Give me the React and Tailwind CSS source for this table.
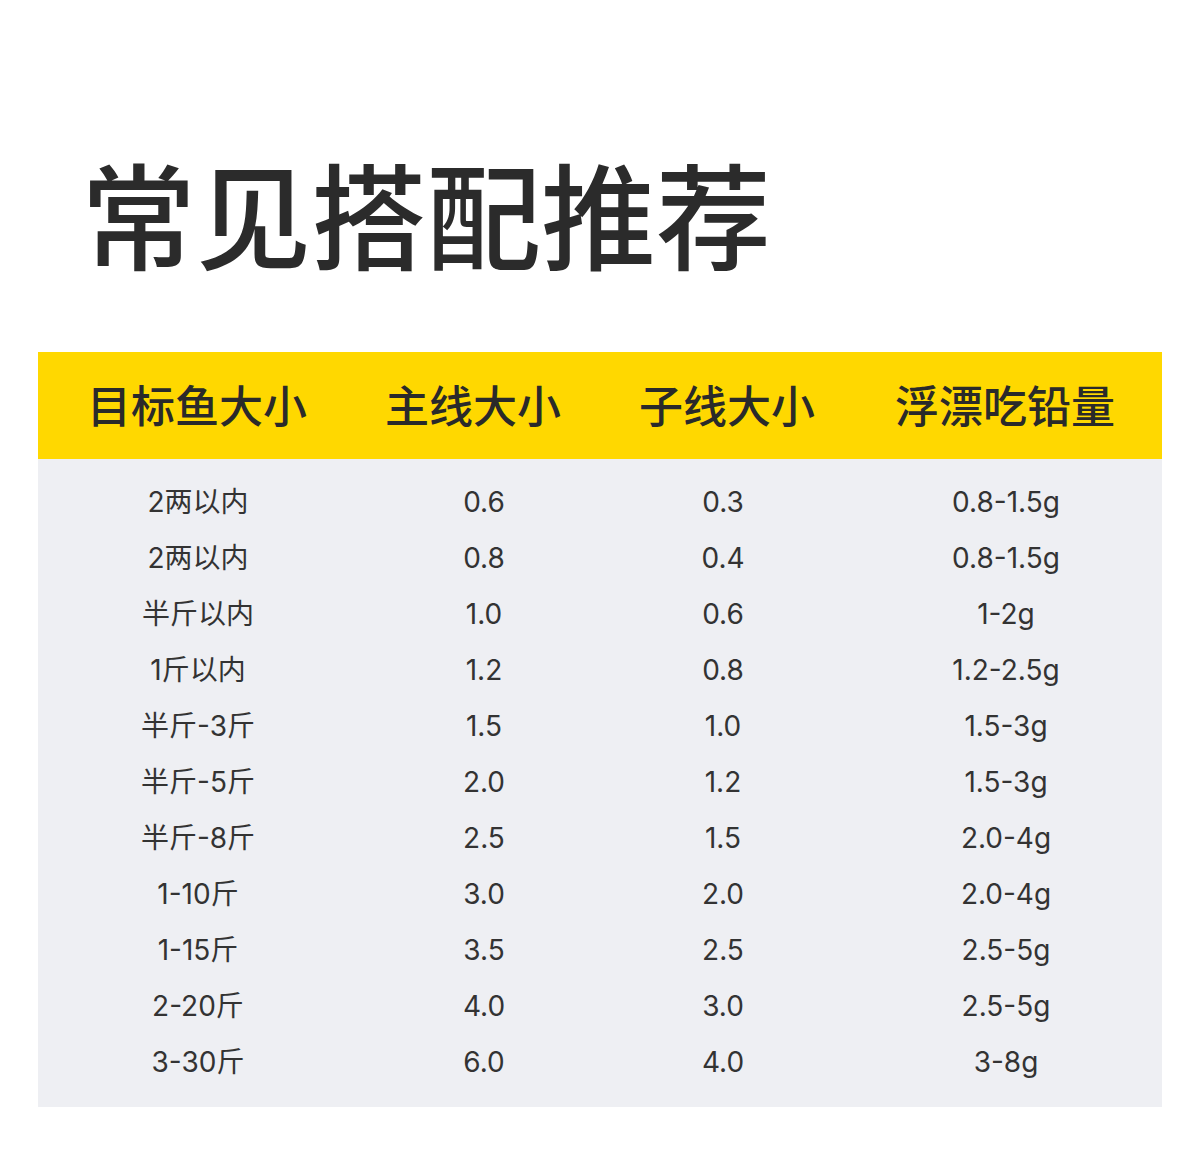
import React from "react";

const rows = [
  ["2两以内", "0.6", "0.3", "0.8-1.5g"],
  ["2两以内", "0.8", "0.4", "0.8-1.5g"],
  ["半斤以内", "1.0", "0.6", "1-2g"],
  ["1斤以内", "1.2", "0.8", "1.2-2.5g"],
  ["半斤-3斤", "1.5", "1.0", "1.5-3g"],
  ["半斤-5斤", "2.0", "1.2", "1.5-3g"],
  ["半斤-8斤", "2.5", "1.5", "2.0-4g"],
  ["1-10斤", "3.0", "2.0", "2.0-4g"],
  ["1-15斤", "3.5", "2.5", "2.5-5g"],
  ["2-20斤", "4.0", "3.0", "2.5-5g"],
  ["3-30斤", "6.0", "4.0", "3-8g"],
];

export default function App() {
  return (
    <div
      className="w-[1200px] h-[1169px] bg-white text-[#2b2b2b] pt-[154px]"
      style={{ fontFamily: '"Noto Sans CJK SC", "Noto Sans", sans-serif' }}
    >
      <h1 className="ml-[81px] text-[115px] leading-none font-medium text-[#2b2b2b]">
        常见搭配推荐
      </h1>
      <div className="mx-[38px] mt-[83px]">
        <div className="h-[107px] pb-[4px] bg-[#ffd800] grid grid-cols-[318px_234px_274px_1fr] items-center text-[44px] font-medium leading-none text-[#2a2a2a]">
          <div className="text-center">目标鱼大小</div>
          <div className="text-center">主线大小</div>
          <div className="text-center">子线大小</div>
          <div className="text-center pr-[16px]">浮漂吃铅量</div>
        </div>
        <div
          className="bg-[#eeeff3] pt-[15px] pb-[17px]"
          style={{ fontFamily: 'Inter, "Noto Sans CJK SC", sans-serif' }}
        >
          {rows.map((r, i) => (
            <div
              key={i}
              className="h-[56px] grid grid-cols-[320px_252px_226px_1fr] items-center text-[28px] leading-none font-normal text-[#333333]"
            >
              <div className="text-center">{r[0]}</div>
              <div className="text-center">{r[1]}</div>
              <div className="text-center">{r[2]}</div>
              <div className="text-center pl-[14px]">{r[3]}</div>
            </div>
          ))}
        </div>
      </div>
    </div>
  );
}
